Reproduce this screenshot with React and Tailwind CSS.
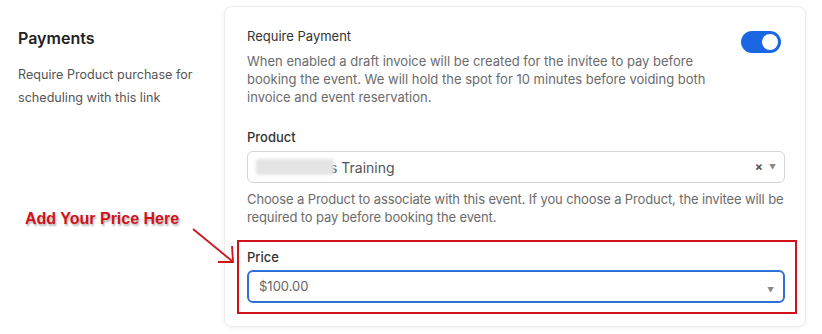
// App.jsx
// Payments settings panel with a red call-out on the price field.

const Toggle = () => (
    <div className="w-[40px] h-[22px] rounded-full bg-[#1b67e3] flex items-center justify-end pr-[3px] shrink-0">
        <div className="w-[16px] h-[16px] rounded-full bg-white" />
    </div>
);

const Caret = () => <span className="text-[7px] text-[#888] leading-none">▼</span>;

export default function App() {
    return (
        <div
            className="w-[822px] h-[334px] bg-white flex relative overflow-hidden"
            style={{ fontFamily: 'Inter, "Noto Sans", sans-serif' }}
        >
            {/* left column */}
            <div className="w-[224px] shrink-0 pl-[18px] pt-[27px]">
                <h2 className="text-[16px] font-semibold text-[#222] leading-[22px]">Payments</h2>
                <p className="mt-[14px] text-[12.6px] leading-[23px] text-[#555]">
                    Require Product purchase for
                    <br />
                    scheduling with this link
                </p>
            </div>

            {/* card */}
            <div className="mt-[6px] w-[582px] h-[321px] rounded-[8px] border border-[#ececec] shadow-[0_1px_4px_rgba(0,0,0,0.06)] bg-white pl-[22px] pr-[20px] pt-[19px]">
                <div className="flex justify-between">
                    <div className="w-[470px]">
                        <div className="text-[13px] leading-[20px] text-[#333]">Require Payment</div>
                        <p className="mt-[6px] text-[13px] leading-[18px] text-[#6b6b6b]">
                            When enabled a draft invoice will be created for the invitee to pay before booking the event. We will hold the spot for 10 minutes before voiding both invoice and event reservation.
                        </p>
                    </div>
                    <div className="pt-[5px] pr-[4px]">
                        <Toggle />
                    </div>
                </div>

                <div className="mt-[22px] text-[13px] leading-[18px] font-medium text-[#333]">Product</div>
                <div className="mt-[5px] h-[32px] rounded-[6px] border border-[#d4d4d4] flex items-center pl-[8px] pr-[8px]">
                    <div className="w-[78px] h-[16px] bg-[#e4e4e4] rounded-[2px] blur-[1.5px]" />
                    <span className="-ml-[4px] text-[14px] text-[#555]">s Training</span>
                    <div className="ml-auto flex items-center gap-[6px]">
                        <span className="text-[12px] font-bold text-[#555] leading-none">×</span>
                        <Caret />
                    </div>
                </div>
                <p className="mt-[7px] text-[13px] leading-[18px] tracking-[-0.12px] text-[#6b6b6b]">
                    Choose a Product to associate with this event. If you choose a Product, the invitee will be required to pay before booking the event.
                </p>

                <div className="relative mt-[22px]">
                    <div className="text-[13px] leading-[18px] font-medium text-[#333]">Price</div>
                    <div className="mt-[4px] h-[33px] rounded-[6px] border-2 border-[#2f6fd8] flex items-center pl-[10px] pr-[9px]">
                        <span className="text-[13px] text-[#666]">$100.00</span>
                        <span className="ml-auto">
                            <Caret />
                        </span>
                    </div>
                    {/* red call-out frame */}
                    <div className="absolute left-[-10px] right-[-12px] top-[-8px] bottom-[-11px] border-2 border-[#d0121b] pointer-events-none" />
                </div>
            </div>

            {/* annotation */}
            <div
                className="absolute left-[25px] top-[209px] text-[16px] font-bold text-[#d0121b] leading-[20px]"
                style={{ fontFamily: '"Liberation Sans", Arial, sans-serif', textShadow: '1px 2px 2px rgba(0,0,0,0.3)' }}
            >
                Add Your Price Here
            </div>
            <svg className="absolute left-[188px] top-[224px]" width="52" height="44" viewBox="0 0 52 44">
                <path d="M5 5 L44 37" stroke="#d0121b" strokeWidth="1.8" fill="none" />
                <path d="M44 22 L45 38 L30 38" stroke="#d0121b" strokeWidth="1.8" fill="none" />
            </svg>
        </div>
    );
}
